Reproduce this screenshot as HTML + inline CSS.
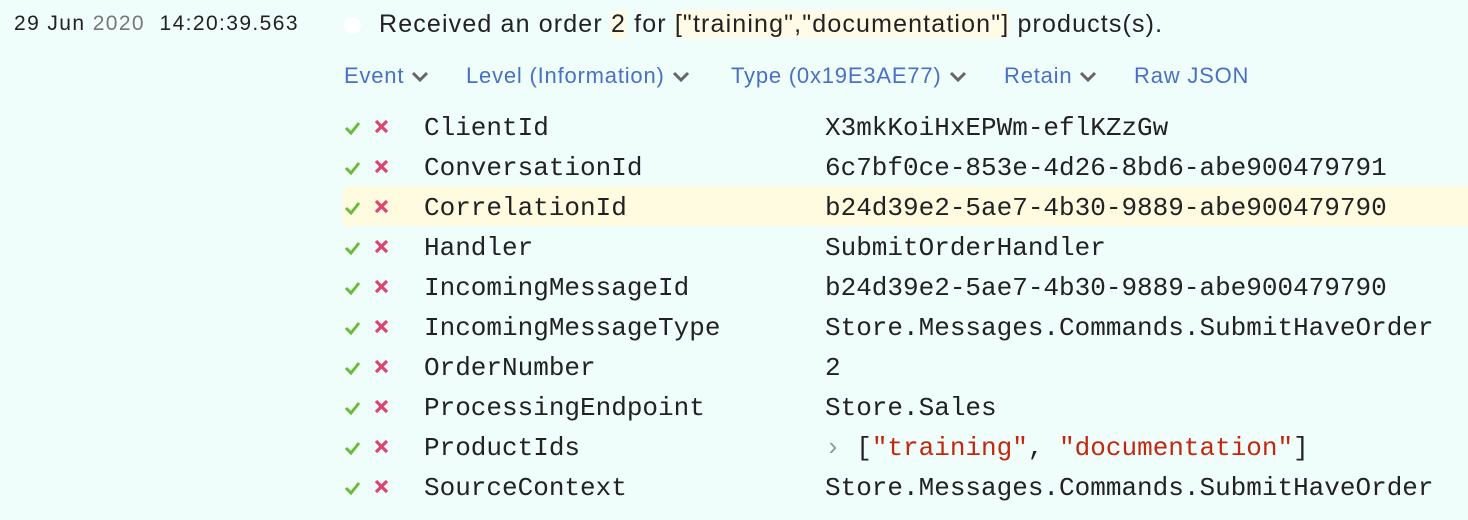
<!DOCTYPE html>
<html><head><meta charset="utf-8"><style>
body{margin:0;width:1468px;height:520px;background:#effdfb;position:relative;overflow:hidden;font-family:"Liberation Sans",sans-serif;}
.a{position:absolute;white-space:nowrap;}
.date{left:14px;top:12px;font-size:21px;color:#222;letter-spacing:1.4px;}
.date .y{color:#777;}
.dot{left:344px;top:17px;width:17px;height:17px;border-radius:50%;background:#fff;}
.msg{left:379px;top:10px;font-size:25px;color:#222;letter-spacing:1.15px;}
.hl{background:#fffbe6;}
.lk{top:63px;font-size:22px;color:#4a70c4;letter-spacing:0.8px;}
.ch{display:inline-block;vertical-align:middle;margin-left:7px;}
.row{position:absolute;left:343px;width:1125px;height:40px;font-family:"Liberation Mono",monospace;font-size:26px;color:#222;}
.row.h{background:#fefbe0;}
.row span{position:absolute;top:7px;}
.row svg{position:absolute;}
.k{left:81px;}
.v{left:482px;}
.s{color:#c4270e;}
.car{color:#999;}
</style></head><body>
<div class="a date">29 Jun <span class="y">2020</span>&nbsp; 14:20:39.563</div>
<div class="a dot"></div>
<div class="a msg">Received an order <span class="hl">2</span> for <span class="hl">["training","documentation"]</span> products(s).</div>
<div class="a lk" style="left:344px">Event<svg class="ch" width="18" height="12" viewBox="0 0 18 12"><path d="M2 2l7 7 7-7" stroke="#666" stroke-width="3" fill="none"/></svg></div>
<div class="a lk" style="left:466px">Level (Information)<svg class="ch" width="18" height="12" viewBox="0 0 18 12"><path d="M2 2l7 7 7-7" stroke="#666" stroke-width="3" fill="none"/></svg></div>
<div class="a lk" style="left:731px">Type (0x19E3AE77)<svg class="ch" width="18" height="12" viewBox="0 0 18 12"><path d="M2 2l7 7 7-7" stroke="#666" stroke-width="3" fill="none"/></svg></div>
<div class="a lk" style="left:1004px">Retain<svg class="ch" width="18" height="12" viewBox="0 0 18 12"><path d="M2 2l7 7 7-7" stroke="#666" stroke-width="3" fill="none"/></svg></div>
<div class="a lk" style="left:1134px">Raw JSON</div>

<svg width="0" height="0" style="position:absolute"><defs>
<g id="ic"><path d="M3 22l5 5 8-10" stroke="#6dbb3a" stroke-width="3" fill="none"/><path d="M33 15l11 11M44 15L33 26" stroke="#e0456f" stroke-width="3.2" fill="none"/></g></defs></svg>

<div class="row" style="top:106px"><svg width="50" height="40"><use href="#ic"/></svg><span class="k">ClientId</span><span class="v">X3mkKoiHxEPWm-eflKZzGw</span></div>
<div class="row" style="top:146px"><svg width="50" height="40"><use href="#ic"/></svg><span class="k">ConversationId</span><span class="v">6c7bf0ce-853e-4d26-8bd6-abe900479791</span></div>
<div class="row h" style="top:186px"><svg width="50" height="40"><use href="#ic"/></svg><span class="k">CorrelationId</span><span class="v">b24d39e2-5ae7-4b30-9889-abe900479790</span></div>
<div class="row" style="top:226px"><svg width="50" height="40"><use href="#ic"/></svg><span class="k">Handler</span><span class="v">SubmitOrderHandler</span></div>
<div class="row" style="top:266px"><svg width="50" height="40"><use href="#ic"/></svg><span class="k">IncomingMessageId</span><span class="v">b24d39e2-5ae7-4b30-9889-abe900479790</span></div>
<div class="row" style="top:306px"><svg width="50" height="40"><use href="#ic"/></svg><span class="k">IncomingMessageType</span><span class="v">Store.Messages.Commands.SubmitHaveOrder</span></div>
<div class="row" style="top:346px"><svg width="50" height="40"><use href="#ic"/></svg><span class="k">OrderNumber</span><span class="v">2</span></div>
<div class="row" style="top:386px"><svg width="50" height="40"><use href="#ic"/></svg><span class="k">ProcessingEndpoint</span><span class="v">Store.Sales</span></div>
<div class="row" style="top:426px"><svg width="50" height="40"><use href="#ic"/></svg><span class="k">ProductIds</span><span class="v"><span class="car" style="position:static">›</span> [<span class="s" style="position:static">"training"</span>, <span class="s" style="position:static">"documentation"</span>]</span></div>
<div class="row" style="top:466px"><svg width="50" height="40"><use href="#ic"/></svg><span class="k">SourceContext</span><span class="v">Store.Messages.Commands.SubmitHaveOrder</span></div>
</body></html>
